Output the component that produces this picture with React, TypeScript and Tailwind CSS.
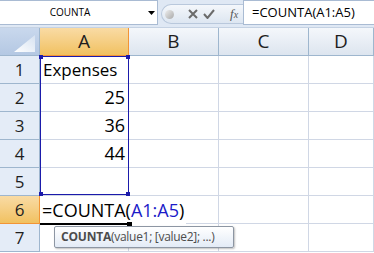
import React from 'react'

const font = { fontFamily: '"Open Sans", "Liberation Sans", sans-serif' }

const cols = [
	{ key: 'A', w: 'w-[89px]' },
	{ key: 'B', w: 'w-[90px]' },
	{ key: 'C', w: 'w-[90px]' },
	{ key: 'D', w: 'flex-1' },
]

const rows: { n: number; a?: string; right?: boolean }[] = [
	{ n: 1, a: 'Expenses' },
	{ n: 2, a: '25', right: true },
	{ n: 3, a: '36', right: true },
	{ n: 4, a: '44', right: true },
	{ n: 5 },
	{ n: 6 },
	{ n: 7 },
]

const FormulaBar = () => (
	<div className="flex h-[28px] bg-[#dfe8f4] border-b border-[#c5d2e3]">
		{/* name box */}
		<div className="relative flex h-[25px] w-[158px] items-center border-y border-r border-[#a9bbd3] bg-white">
			<span className="w-[140px] text-center text-[10px] text-black">COUNTA</span>
			<svg className="absolute left-[148px] top-[10px]" width="7" height="4" viewBox="0 0 7 4">
				<path d="M0 0h7L3.5 4z" fill="#000" />
			</svg>
		</div>
		{/* buttons */}
		<div className="ml-[3px] mt-[4px] flex h-[20px] w-[82px] items-center rounded-l-full border border-r-0 border-[#b9c8dc] bg-gradient-to-b from-[#f4f7fb] to-[#dde6f1]">
			<div className="ml-[3px] h-[9px] w-[9px] rounded-full bg-gradient-to-br from-[#eeeeee] to-[#a9a9a9]" />
			<svg className="ml-[14px]" width="10" height="10" viewBox="0 0 10 10">
				<path d="M1 1l8 8M9 1l-8 8" stroke="#6b6b6b" strokeWidth="2" />
			</svg>
			<svg className="ml-[5px]" width="12" height="10" viewBox="0 0 12 10">
				<path d="M1 5l3.5 4L11 1" stroke="#6b6b6b" strokeWidth="2" fill="none" />
			</svg>
			<span
				className="ml-[15px] text-[13px] italic text-[#555]"
				style={{ fontFamily: '"Liberation Serif", serif' }}
			>
				f<span className="text-[10px]">x</span>
			</span>
		</div>
		{/* formula input */}
		<div className="flex h-[25px] flex-1 items-center border-y border-l border-[#a9bbd3] bg-white pl-[8px]">
			<span className="text-[13px] text-black">=COUNTA(A1:A5)</span>
		</div>
	</div>
)

const HeaderRow = () => (
	<div className="flex h-[28px]">
		<div className="relative w-[40px] border-r border-b border-[#9eb6ce] bg-gradient-to-b from-[#c9d8ed] to-[#b4c8e3]">
			<svg className="absolute bottom-[3px] right-[4px]" width="21" height="17" viewBox="0 0 21 17">
				<defs>
					<linearGradient id="tri" x1="0" y1="1" x2="1" y2="0">
						<stop offset="0" stopColor="#ffffff" />
						<stop offset="1" stopColor="#d6e2f1" />
					</linearGradient>
				</defs>
				<path d="M21 0V17H0z" fill="url(#tri)" />
			</svg>
		</div>
		{cols.map((c) => (
			<div
				key={c.key}
				className={
					c.key === 'A'
						? `${c.w} flex items-center justify-center border-r border-b border-[#f29436] bg-gradient-to-b from-[#f9dba4] to-[#f1c15f] text-[19px] text-[#1e1e1e]`
						: `${c.w} flex items-center justify-center border-r border-b border-[#9eb6ce] bg-gradient-to-b from-[#f4f7fb] to-[#dde5ef] text-[19px] text-[#1e1e1e]`
				}
			>
				{c.key}
			</div>
		))}
	</div>
)

export default function App() {
	return (
		<div className="relative h-[253px] w-[374px] overflow-hidden bg-white" style={font}>
			<FormulaBar />
			<HeaderRow />
			{rows.map((r) => (
				<div key={r.n} className="flex h-[28px]">
					<div
						className={
							r.n === 6
								? 'flex w-[40px] items-center justify-center border-r border-b border-[#f29436] bg-gradient-to-b from-[#f9dba4] to-[#f1c15f] text-[17px] text-[#1e1e1e]'
								: 'flex w-[40px] items-center justify-center border-r border-b border-[#9eb6ce] bg-[#e4ecf7] text-[17px] text-[#1e1e1e]'
						}
					>
						{r.n}
					</div>
					{cols.map((c) => (
						<div
							key={c.key}
							className={
								c.key === 'A' && r.n === 6
									? `${c.w} relative flex items-center border-b border-[#d0d7e5]`
									: `${c.w} flex items-center border-r border-b border-[#d0d7e5] px-[3px] text-black ${r.right ? 'justify-end text-[18px]' : 'text-[17px]'}`
							}
						>
							{c.key === 'A' && r.n === 6 ? (
								<span className="absolute left-[2px] top-[1px] whitespace-nowrap bg-white pr-[2px] text-[18px] text-black">
									=COUNTA(<span className="text-[#1b1bc8]">A1:A5</span>)
								</span>
							) : c.key === 'A' ? (
								r.a
							) : null}
						</div>
					))}
				</div>
			))}

			{/* range border A1:A5 */}
			<div className="absolute left-[40px] top-[56px] h-[139px] w-[89px] border border-[#1b1bab]" />
			<div className="absolute left-[39px] top-[55px] h-[4px] w-[4px] bg-[#1b1bab]" />
			<div className="absolute left-[126px] top-[55px] h-[4px] w-[4px] bg-[#1b1bab]" />
			<div className="absolute left-[39px] top-[192px] h-[4px] w-[4px] bg-[#1b1bab]" />
			<div className="absolute left-[126px] top-[192px] h-[4px] w-[4px] bg-[#1b1bab]" />

			{/* active cell bottom + handle */}
			<div className="absolute left-[40px] top-[223px] h-[2px] w-[88px] bg-black" />
			<div className="absolute left-[127px] top-[222px] h-[5px] w-[5px] bg-black" />

			{/* tooltip */}
			<div className="absolute left-[54px] top-[226px] flex h-[22px] w-[180px] items-center whitespace-nowrap rounded-[2px] border border-[#8d96a3] bg-gradient-to-b from-white to-[#e3ebf6] pl-[6px] text-[12px] text-[#4c4c4c] shadow-[1px_1px_2px_rgba(0,0,0,0.25)]">
				<span className="font-bold tracking-[-0.2px]">COUNTA</span>
				<span className="tracking-[-0.3px]">(value1; [value2]; ...)</span>
			</div>
		</div>
	)
}
